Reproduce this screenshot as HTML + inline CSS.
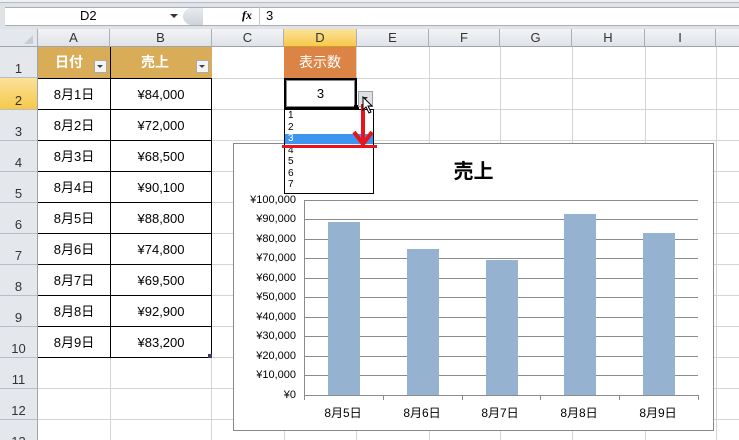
<!DOCTYPE html>
<html><head><meta charset="utf-8"><style>
*{margin:0;padding:0;box-sizing:border-box}
html,body{width:739px;height:440px;overflow:hidden}
body{background:#fff;position:relative;font-family:"Liberation Sans","Noto Sans CJK JP",sans-serif;font-size:13px;color:#000}
.a{position:absolute}
.vl{position:absolute;top:47px;height:393px;width:1px;background:#d4d4d4}
.hl{position:absolute;left:38px;width:701px;height:1px;background:#d4d4d4}
.ch{position:absolute;top:29px;height:18px;background:linear-gradient(#f3f4f6,#dfe2e7);border-right:1px solid #aab0b8;border-bottom:1px solid #9da4ad;text-align:center;font-size:13px;line-height:18px;color:#333}
.rh{position:absolute;left:0;width:38px;background:#e4e7ec;border-bottom:1px solid #b8bec6;border-right:1px solid #9da4ad;text-align:center;font-size:13px;color:#333}
.rh span{position:absolute;bottom:1px;left:0;width:37px}
.cell{position:absolute;text-align:center;font-size:13px;line-height:31px}
.yl{position:absolute;left:210px;font-size:11px;width:86px;text-align:right}
.gl{position:absolute;left:304px;width:394px;height:1px;background:#8c8c8c}
.bar{position:absolute;width:32px;background:#95b3d0}
.xl{position:absolute;top:404px;font-size:12px;width:60px;text-align:center}
.li{position:absolute;left:288px;font-size:10px;line-height:11.5px}
</style></head><body>
<div class="a" style="left:0;top:0;width:739px;height:29px;background:#dfe3e8"></div>
<div class="a" style="left:0;top:0;width:739px;height:3px;background:#eef0f3;border-bottom:1px solid #b4bac2"></div>
<div class="a" style="left:5px;top:7px;width:734px;height:19px;background:#fff;border-top:1px solid #a8aeb6;border-bottom:1px solid #a8aeb6"></div>
<div class="a" style="left:80px;top:8px;font-size:13px">D2</div>
<div class="a" style="left:170px;top:14px;width:0;height:0;border-left:4px solid transparent;border-right:4px solid transparent;border-top:4px solid #333"></div>
<div class="a" style="left:183px;top:8px;width:20px;height:17px;border-radius:9px 0 0 9px;background:linear-gradient(#e8ebee,#cfd4da)"></div>
<div class="a" style="left:242px;top:8px;font-size:12px;font-style:italic;font-family:'Liberation Serif',serif;font-weight:bold">fx</div>
<div class="a" style="left:259px;top:7px;width:1px;height:19px;background:#c4c8cd"></div>
<div class="a" style="left:266px;top:8px;font-size:13px">3</div>

<div class="ch" style="left:0;width:38px;background:#e4e7ec"></div>
<div class="a" style="left:24px;top:35px;width:0;height:0;border-left:9px solid transparent;border-bottom:9px solid #c7ccd2"></div>
<div class="ch" style="left:38px;width:72px">A</div>
<div class="ch" style="left:110px;width:102px">B</div>
<div class="ch" style="left:212px;width:72px">C</div>
<div class="ch" style="left:284px;width:73px;background:linear-gradient(#fbe29a,#f7c94a);border-bottom:1px solid #c9a030">D</div>
<div class="ch" style="left:357px;width:72px">E</div>
<div class="ch" style="left:429px;width:71px">F</div>
<div class="ch" style="left:500px;width:72px">G</div>
<div class="ch" style="left:572px;width:73px">H</div>
<div class="ch" style="left:645px;width:71px">I</div>
<div class="ch" style="left:716px;width:30px"></div>

<div class="vl" style="left:110px"></div><div class="vl" style="left:211px"></div><div class="vl" style="left:284px"></div>
<div class="vl" style="left:356px"></div><div class="vl" style="left:429px"></div><div class="vl" style="left:500px"></div>
<div class="vl" style="left:572px"></div><div class="vl" style="left:645px"></div><div class="vl" style="left:716px"></div>
<div class="hl" style="top:78px"></div><div class="hl" style="top:109px"></div><div class="hl" style="top:140px"></div>
<div class="hl" style="top:171px"></div><div class="hl" style="top:202px"></div><div class="hl" style="top:233px"></div>
<div class="hl" style="top:264px"></div><div class="hl" style="top:295px"></div><div class="hl" style="top:326px"></div>
<div class="hl" style="top:357px"></div><div class="hl" style="top:388px"></div><div class="hl" style="top:419px"></div>

<div class="rh" style="top:47px;height:31px"><span>1</span></div>
<div class="rh" style="top:78px;height:32px;background:linear-gradient(#fbe29a,#f7c94a)"><span>2</span></div>
<div class="rh" style="top:110px;height:31px"><span>3</span></div>
<div class="rh" style="top:141px;height:31px"><span>4</span></div>
<div class="rh" style="top:172px;height:31px"><span>5</span></div>
<div class="rh" style="top:203px;height:31px"><span>6</span></div>
<div class="rh" style="top:234px;height:31px"><span>7</span></div>
<div class="rh" style="top:265px;height:31px"><span>8</span></div>
<div class="rh" style="top:296px;height:31px"><span>9</span></div>
<div class="rh" style="top:327px;height:31px"><span>10</span></div>
<div class="rh" style="top:358px;height:31px"><span>11</span></div>
<div class="rh" style="top:389px;height:31px"><span>12</span></div>
<div class="rh" style="top:420px;height:31px"><span>13</span></div>

<div class="a" style="left:38px;top:47px;width:174px;height:31px;background:#d9ac58"></div>
<div class="a" style="left:110px;top:47px;width:1px;height:31px;background:#000"></div>
<div class="cell" style="left:38px;top:47px;width:62px;color:#fff;font-weight:bold;font-size:14px">日付</div>
<div class="cell" style="left:110px;top:47px;width:90px;color:#fff;font-weight:bold;font-size:14px">売上</div>
<div class="a" style="left:94px;top:60px;width:13px;height:13px;background:#f3f3f3;border:1px solid #aaa"></div>
<div class="a" style="left:97px;top:65px;border-left:3.5px solid transparent;border-right:3.5px solid transparent;border-top:3.5px solid #444"></div>
<div class="a" style="left:196px;top:60px;width:13px;height:13px;background:#f3f3f3;border:1px solid #aaa"></div>
<div class="a" style="left:199px;top:65px;border-left:3.5px solid transparent;border-right:3.5px solid transparent;border-top:3.5px solid #444"></div>

<div class="a" style="left:38px;top:78px;width:174px;height:280px;border:1px solid #000;border-left:none"></div>
<div class="a" style="left:110px;top:78px;width:1px;height:280px;background:#000"></div>
<div class="a" style="left:38px;top:109px;width:174px;height:1px;background:#000"></div>
<div class="a" style="left:38px;top:140px;width:174px;height:1px;background:#000"></div>
<div class="a" style="left:38px;top:171px;width:174px;height:1px;background:#000"></div>
<div class="a" style="left:38px;top:202px;width:174px;height:1px;background:#000"></div>
<div class="a" style="left:38px;top:233px;width:174px;height:1px;background:#000"></div>
<div class="a" style="left:38px;top:264px;width:174px;height:1px;background:#000"></div>
<div class="a" style="left:38px;top:295px;width:174px;height:1px;background:#000"></div>
<div class="a" style="left:38px;top:326px;width:174px;height:1px;background:#000"></div>
<div class="a" style="left:208px;top:354px;width:4px;height:4px;background:#3a3f6a"></div>

<div class="cell" style="left:38px;top:79px;width:72px">8月1日</div><div class="cell" style="left:110px;top:79px;width:102px">¥84,000</div>
<div class="cell" style="left:38px;top:110px;width:72px">8月2日</div><div class="cell" style="left:110px;top:110px;width:102px">¥72,000</div>
<div class="cell" style="left:38px;top:141px;width:72px">8月3日</div><div class="cell" style="left:110px;top:141px;width:102px">¥68,500</div>
<div class="cell" style="left:38px;top:172px;width:72px">8月4日</div><div class="cell" style="left:110px;top:172px;width:102px">¥90,100</div>
<div class="cell" style="left:38px;top:203px;width:72px">8月5日</div><div class="cell" style="left:110px;top:203px;width:102px">¥88,800</div>
<div class="cell" style="left:38px;top:234px;width:72px">8月6日</div><div class="cell" style="left:110px;top:234px;width:102px">¥74,800</div>
<div class="cell" style="left:38px;top:265px;width:72px">8月7日</div><div class="cell" style="left:110px;top:265px;width:102px">¥69,500</div>
<div class="cell" style="left:38px;top:296px;width:72px">8月8日</div><div class="cell" style="left:110px;top:296px;width:102px">¥92,900</div>
<div class="cell" style="left:38px;top:327px;width:72px">8月9日</div><div class="cell" style="left:110px;top:327px;width:102px">¥83,200</div>

<div class="a" style="left:284px;top:47px;width:72px;height:31px;background:#dc8446"></div>
<div class="cell" style="left:284px;top:47px;width:72px;color:#fff;font-size:14px">表示数</div>
<div class="a" style="left:284px;top:78px;width:73px;height:31px;background:#fff;border:2px solid #000"></div>
<div class="a" style="left:286px;top:80px;width:69px;height:27px;border:1px solid #888"></div>
<div class="cell" style="left:284px;top:78px;width:73px">3</div>
<div class="a" style="left:354px;top:105px;width:5px;height:5px;background:#000"></div>
<div class="a" style="left:358px;top:91px;width:15px;height:16px;background:#dde0e4;border:1px solid #9aa0a8"></div>
<div class="a" style="left:362px;top:97px;border-left:3.5px solid transparent;border-right:3.5px solid transparent;border-top:3.5px solid #333"></div>

<div class="a" style="left:233px;top:143px;width:481px;height:288px;background:#fff;border:1px solid #888"></div>
<div class="a" style="left:233px;top:155px;width:481px;text-align:center;font-size:20px;font-weight:bold">売上</div>
<div class="gl" style="top:200px"></div><div class="gl" style="top:219px"></div><div class="gl" style="top:239px"></div>
<div class="gl" style="top:258px"></div><div class="gl" style="top:278px"></div><div class="gl" style="top:297px"></div>
<div class="gl" style="top:317px"></div><div class="gl" style="top:336px"></div><div class="gl" style="top:356px"></div>
<div class="gl" style="top:375px"></div><div class="gl" style="top:395px"></div>
<div class="a" style="left:304px;top:200px;width:1px;height:200px;background:#8c8c8c"></div>
<div class="a" style="left:383px;top:395px;width:1px;height:5px;background:#8c8c8c"></div>
<div class="a" style="left:462px;top:395px;width:1px;height:5px;background:#8c8c8c"></div>
<div class="a" style="left:540px;top:395px;width:1px;height:5px;background:#8c8c8c"></div>
<div class="a" style="left:619px;top:395px;width:1px;height:5px;background:#8c8c8c"></div>
<div class="a" style="left:698px;top:395px;width:1px;height:5px;background:#8c8c8c"></div>
<div class="yl" style="top:194px">¥100,000</div><div class="yl" style="top:213px">¥90,000</div>
<div class="yl" style="top:233px">¥80,000</div><div class="yl" style="top:252px">¥70,000</div>
<div class="yl" style="top:272px">¥60,000</div><div class="yl" style="top:291px">¥50,000</div>
<div class="yl" style="top:311px">¥40,000</div><div class="yl" style="top:330px">¥30,000</div>
<div class="yl" style="top:350px">¥20,000</div><div class="yl" style="top:369px">¥10,000</div>
<div class="yl" style="top:389px">¥0</div>
<div class="bar" style="left:328px;top:222px;height:173px"></div>
<div class="bar" style="left:407px;top:249px;height:146px"></div>
<div class="bar" style="left:486px;top:260px;height:135px"></div>
<div class="bar" style="left:564px;top:214px;height:181px"></div>
<div class="bar" style="left:643px;top:233px;height:162px"></div>
<div class="xl" style="left:313px">8月5日</div><div class="xl" style="left:392px">8月6日</div>
<div class="xl" style="left:470px">8月7日</div><div class="xl" style="left:549px">8月8日</div>
<div class="xl" style="left:628px">8月9日</div>

<div class="a" style="left:284px;top:109px;width:90px;height:85px;background:#fff;border:1px solid #000"></div>
<div class="a" style="left:285px;top:134px;width:88px;height:10px;background:#3d95f0"></div>
<div class="li" style="top:110px">1</div><div class="li" style="top:122px">2</div>
<div class="li" style="top:133px;color:#fff">3</div><div class="li" style="top:145px">4</div>
<div class="li" style="top:156px">5</div><div class="li" style="top:168px">6</div><div class="li" style="top:179px">7</div>
<div class="a" style="left:282px;top:145px;width:95px;height:3px;background:#e8131b"></div>
<svg class="a" style="left:350px;top:102px" width="26" height="46" viewBox="0 0 26 46">
<path d="M13 2 V40" stroke="#e8131b" stroke-width="4"/>
<path d="M4 30 L13 42 L22 30" stroke="#e8131b" stroke-width="4" fill="none"/>
</svg>
<svg class="a" style="left:362px;top:96px" width="14" height="20" viewBox="0 0 14 20">
<path d="M1 1 V14 L4 11 L7 17 L9 16 L6 10 L10 10 Z" fill="#fff" stroke="#000" stroke-width="1"/>
</svg>
</body></html>
